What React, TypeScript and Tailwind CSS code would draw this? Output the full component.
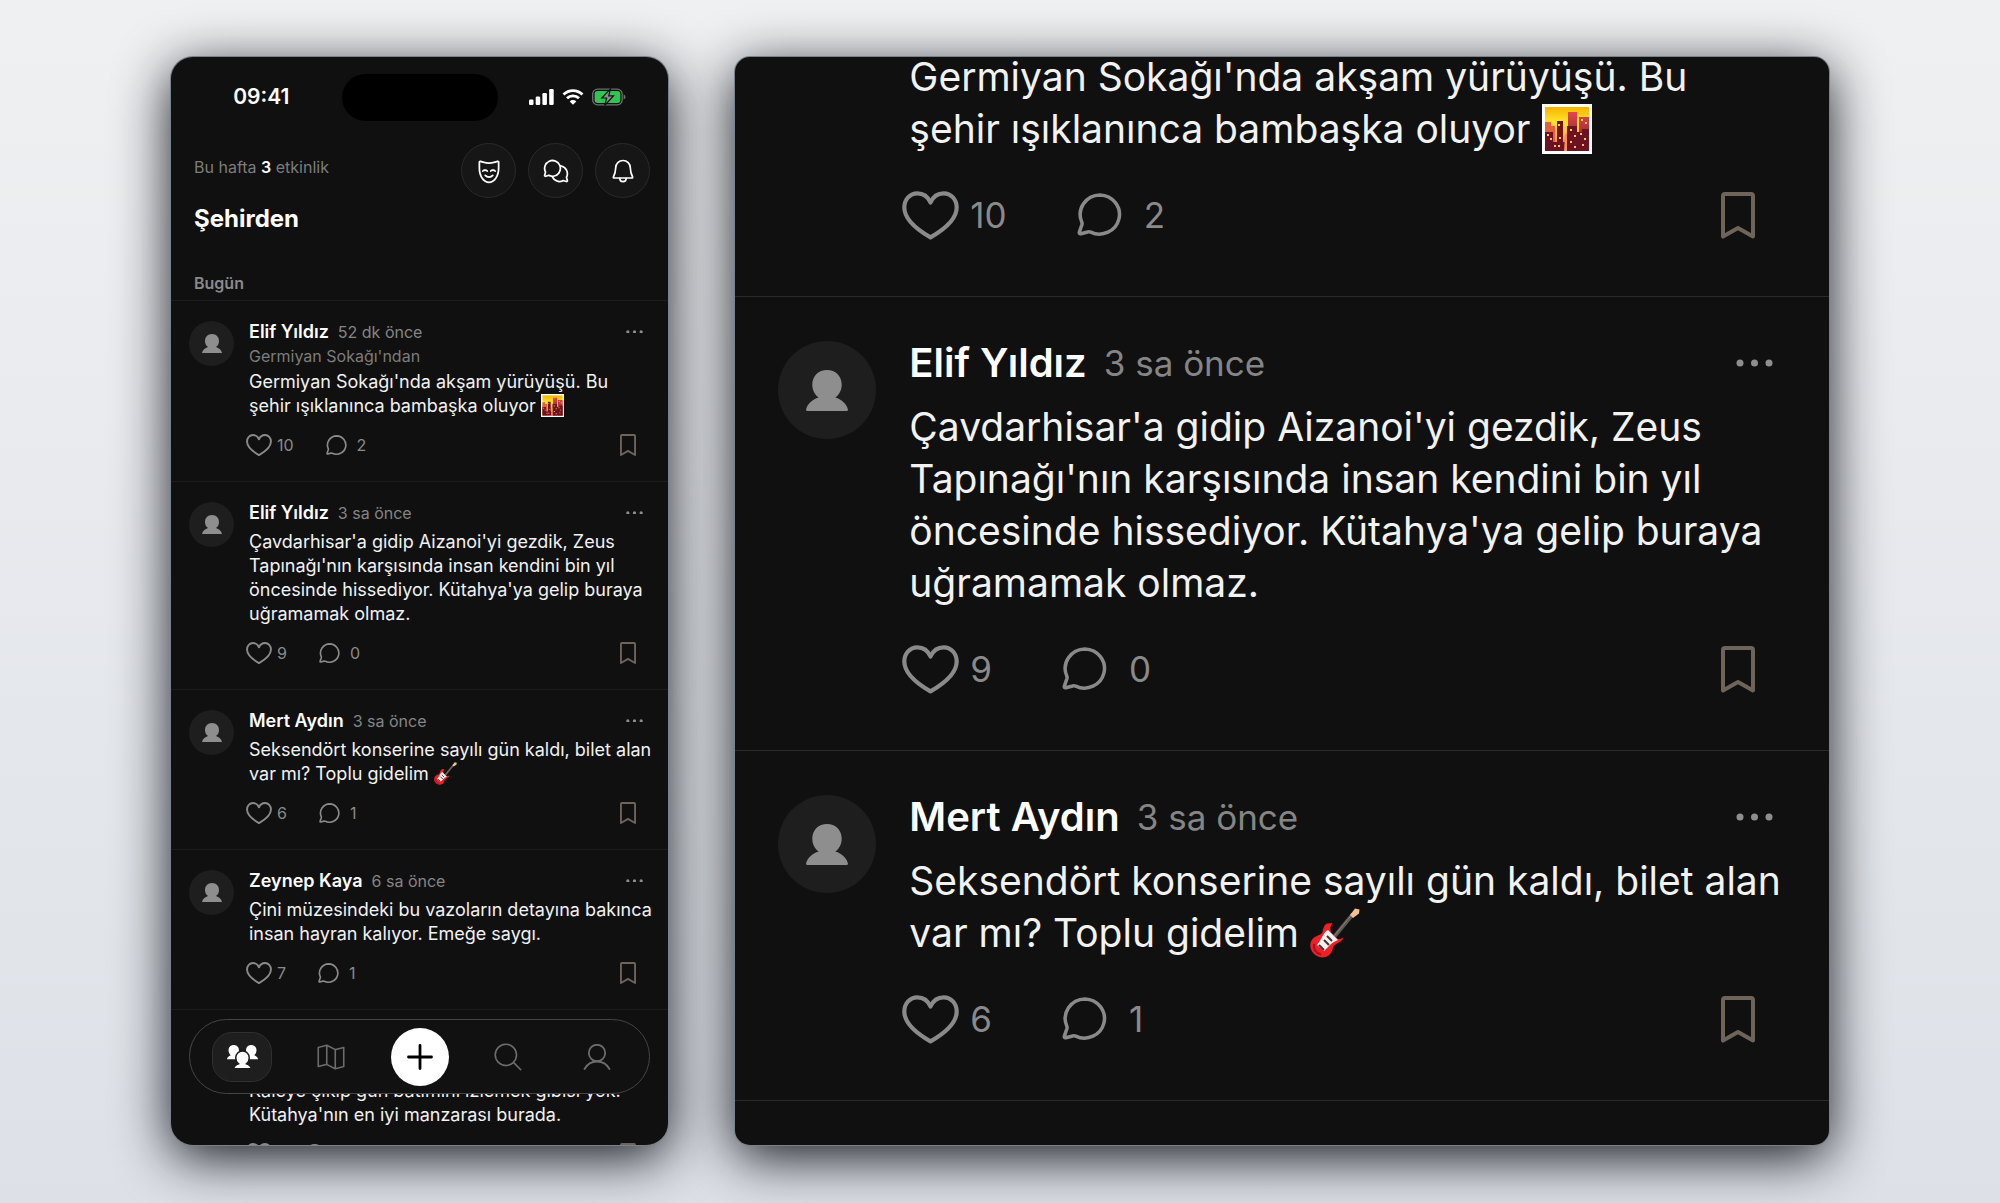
import type { ReactNode } from "react";
import {
  PiChatsCircle,
  PiMagnifyingGlassLight,
  PiMapTrifoldLight,
  PiMaskHappy,
} from "react-icons/pi";

type Size = "sm" | "lg";

type PostData = {
  author?: string;
  time?: string;
  place?: string;
  lines: string[];
  emoji?: "city" | "guitar";
  likes?: number;
  comments?: number;
};

const walk: PostData = {
  author: "Elif Yıldız",
  time: "52 dk önce",
  place: "Germiyan Sokağı'ndan",
  lines: ["Germiyan Sokağı'nda akşam yürüyüşü. Bu", "şehir ışıklanınca bambaşka oluyor "],
  emoji: "city",
  likes: 10,
  comments: 2,
};

const temple: PostData = {
  author: "Elif Yıldız",
  time: "3 sa önce",
  lines: [
    "Çavdarhisar'a gidip Aizanoi'yi gezdik, Zeus",
    "Tapınağı'nın karşısında insan kendini bin yıl",
    "öncesinde hissediyor. Kütahya'ya gelip buraya",
    "uğramamak olmaz.",
  ],
  likes: 9,
  comments: 0,
};

const concert: PostData = {
  author: "Mert Aydın",
  time: "3 sa önce",
  lines: ["Seksendört konserine sayılı gün kaldı, bilet alan", "var mı? Toplu gidelim "],
  emoji: "guitar",
  likes: 6,
  comments: 1,
};

const museum: PostData = {
  author: "Zeynep Kaya",
  time: "6 sa önce",
  lines: ["Çini müzesindeki bu vazoların detayına bakınca", "insan hayran kalıyor. Emeğe saygı."],
  likes: 7,
  comments: 1,
};

const castle: PostData = {
  place: " ",
  lines: ["Kaleye çıkıp gün batımını izlemek gibisi yok.", "Kütahya'nın en iyi manzarası burada."],
};

const styles = {
  sm: {
    post: "gap-[15px] pb-[22px] pl-[18px] pr-[18px]",
    top: "pt-5",
    avatar: "size-[45px]",
    person: "w-5",
    nameRow: "h-[21px] gap-[9px]",
    name: "text-[18px]",
    time: "text-[16px]",
    place: "mt-1 h-5 text-[16px]",
    dots: "w-[17px] mr-[7px]",
    text: "text-[18px] leading-[24px]",
    textGap: "mt-[7px]",
    textGapAfterPlace: "mt-1",
    emoji: "size-[23px]",
    actions: "mt-[13px] h-7 text-[16px]",
    like: "-ml-[3px] gap-[5px]",
    heart: "w-[26px]",
    comment: "ml-8 gap-[10px]",
    bubble: "w-[21px]",
    bookmark: "w-4 mr-[14px]",
  },
  lg: {
    post: "gap-[33px] pb-[51px] pl-[43px] pr-[43px]",
    top: "pt-[44px]",
    avatar: "size-[98px]",
    person: "w-[42px]",
    nameRow: "h-[44px] gap-[17px]",
    name: "text-[40px]",
    time: "text-[35px]",
    place: "h-[46px] text-[35px]",
    dots: "w-[37px] mr-[13px]",
    text: "text-[39px] leading-[52px]",
    textGap: "mt-4",
    textGapAfterPlace: "mt-4",
    emoji: "size-[50px]",
    actions: "mt-[30px] h-[60px] text-[35px]",
    like: "-ml-[7px] gap-[11px]",
    heart: "w-[57px]",
    comment: "ml-[70px] gap-[22px]",
    bubble: "w-[45px]",
    bookmark: "w-[34px] mr-[31px]",
  },
};

function Person({ className }: { className: string }) {
  return (
    <svg viewBox="0 0 42 41" className={className} fill="currentColor" aria-hidden="true">
      <path d="M21 0C29.5 0 35.7 6 35.7 14.5C35.7 20.5 33 25 29.3 27.5C36 29.5 40.5 34 41.9 39.3Q42.2 41 40.6 41H1.4Q-.2 41 .1 39.3C1.5 34 6 29.5 12.7 27.5C9 25 6.3 20.5 6.3 14.5C6.3 6 12.5 0 21 0Z" />
    </svg>
  );
}

function Heart({ className }: { className: string }) {
  return (
    <svg viewBox="0 0 57 49" className={className} fill="none" stroke="currentColor" strokeWidth="4.2" strokeLinejoin="round" aria-hidden="true">
      <path d="M28.5 46.4C20 41.5 2.3 31 2.3 16.5C2.3 8.3 8 2.3 15.3 2.3C21.5 2.3 26 5.8 28.5 11.5C31 5.8 35.5 2.3 41.7 2.3C49 2.3 54.7 8.3 54.7 16.5C54.7 31 37 41.5 28.5 46.4Z" />
    </svg>
  );
}

function Bubble({ className }: { className: string }) {
  return (
    <svg viewBox="0 0 46 44" className={className} fill="none" stroke="currentColor" strokeWidth="3.6" strokeLinejoin="round" aria-hidden="true">
      <path d="M23.5 2A20.5 20 0 1 1 14 40Q12.4 39.3 10.8 39.8L4 41.6Q2 42 2.4 40L5 32.5Q5.4 31 4.9 29.8A20.5 20 0 0 1 23.5 2Z" />
    </svg>
  );
}

function Bookmark({ className }: { className: string }) {
  return (
    <svg viewBox="0 0 34 47" className={className} fill="none" stroke="currentColor" strokeWidth="4" strokeLinejoin="round" aria-hidden="true">
      <path d="M2 44.6V4Q2 2 4 2H30Q32 2 32 4V44.6L17 36Z" />
    </svg>
  );
}

function Bell() {
  return (
    <svg viewBox="0 0 22 24" className="w-[22px]" fill="none" stroke="currentColor" strokeWidth="1.7" strokeLinejoin="round" strokeLinecap="round" aria-hidden="true">
      <path d="M11 1.500C6.800 1.500 3.800 4.600 3.700 8.700C3.600 13 2.800 15.300 1.400 18Q1.100 19 2 19H20Q20.900 19 20.600 18C19.200 15.300 18.400 13 18.300 8.700C18.200 4.600 15.200 1.500 11 1.500Z" />
      <path d="M7.800 19.300C7.800 21.400 9.200 22.700 11 22.700S14.200 21.400 14.200 19.300" />
    </svg>
  );
}

function City({ className }: { className: string }) {
  return (
    <svg viewBox="0 0 50 50" className={`inline-block align-[-22%] ${className}`} role="img" aria-label="Gün batımında şehir">
      <defs>
        <linearGradient id="dusk" x1="0" y1="0" x2="0" y2="1">
          <stop offset="0" stopColor="#f5b400" />
          <stop offset=".35" stopColor="#ffe52e" />
          <stop offset="1" stopColor="#ff6b3d" />
        </linearGradient>
        <linearGradient id="tower" x1="0" y1="0" x2="0" y2="1">
          <stop offset="0" stopColor="#e0474c" />
          <stop offset="1" stopColor="#7a1522" />
        </linearGradient>
      </defs>
      <rect width="50" height="50" fill="#fff" />
      <rect x="3" y="3" width="44" height="44" fill="url(#dusk)" />
      <path d="M3 18H9V22H13V47H3Z" fill="#e2603a" />
      <path d="M26 8H35V47H26ZM37 13H47V47H37Z" fill="url(#tower)" />
      <path d="M3 28H11V38H15V17H21V38H23V47H3ZM25 22H35V28H40V25H47V47H25Z" fill="#6d1220" />
      <path d="M5 30h2v2H5zM8 34h2v2H8zM12 41h2v2h-2zM16 20h2v2h-2zM17 33h2v2h-2zM16 41h2v2h-2zM28 25h2v2h-2zM32 31h2v2h-2zM28 37h2v2h-2zM32 42h2v2h-2zM39 15h2v2h-2zM43 18h2v2h-2zM38 29h2v2h-2zM42 34h2v2h-2zM40 40h2v2h-2z" fill="#ffc46b" />
      <path d="M23 30H25V47H22Z" fill="#ff8a5c" />
    </svg>
  );
}

function Guitar({ className }: { className: string }) {
  return (
    <svg viewBox="0 0 50 50" className={`inline-block align-[-22%] ${className}`} role="img" aria-label="Gitar">
      <path d="M24 29L43 6" stroke="#5d5550" strokeWidth="4" />
      <path d="M24.500 27.500L42 6.500" stroke="#8c8078" strokeWidth="1" />
      <path d="M40 7L45 .6L49.500 1.500L49 5.500L43 10Z" fill="#f3c08f" />
      <path d="M17 15.500C14 17 13 21 12.500 24C11.500 27.500 6 27 2.500 31C-1.500 36 0 44 6 47.500C12 51 19 49.500 21.500 44C23 40 23.500 37 27 35.500C30 34 33 32.500 33 29.500C30 31.500 27.500 31.500 26 29.500L22 25.500C19.500 22.500 20 18.500 22.500 15Z" fill="#ee1f27" />
      <path d="M18 22C14 24 13 28 11 31L7 37L14 43L20 37C23 34 26 33 28 32L22 26Z" fill="#f4f0ee" />
      <path d="M9 37L14 42M14 32L19 37M17 28L22 33" stroke="#3b3433" strokeWidth="2" />
      <path d="M4 36C3 41 6 45 11 46.500" stroke="#a80f19" strokeWidth="2" fill="none" />
    </svg>
  );
}

function Post({ post, size, continued = false }: { post: PostData; size: Size; continued?: boolean }) {
  const s = styles[size];
  const divider = size === "sm" ? "border-[#1c1c1c]" : "border-[#2a2a2a]";
  return (
    <article className={`flex shrink-0 items-start border-b ${divider} ${s.post} ${continued ? "" : s.top}`}>
      <div
        className={`flex shrink-0 items-center justify-center rounded-full bg-[#1e1e1e] text-[#8e8e8e] ${s.avatar} ${continued ? "invisible" : ""}`}
      >
        <Person className={s.person} />
      </div>
      <div className="min-w-0 flex-1">
        {!continued && (
          <header className={`flex items-center whitespace-nowrap ${s.nameRow}`}>
            <h3 className={`font-semibold text-white ${s.name}`}>{post.author}</h3>
            <span className={`text-[#858585] ${s.time}`}>{post.time}</span>
            <button type="button" aria-label="Diğer seçenekler" className={`ml-auto text-[#8e8e8e] ${s.dots}`}>
              <svg viewBox="0 0 37 8" className="w-full" fill="currentColor" aria-hidden="true">
                <circle cx="4" cy="4" r="3.500" />
                <circle cx="18.500" cy="4" r="3.500" />
                <circle cx="33" cy="4" r="3.500" />
              </svg>
            </button>
          </header>
        )}
        {!continued && post.place && (
          <p className={`flex items-center whitespace-nowrap text-[#7c7c7c] ${s.place}`}>{post.place}</p>
        )}
        <p
          className={`whitespace-pre text-[#f2f2f2] ${s.text} ${continued ? "" : post.place ? s.textGapAfterPlace : s.textGap}`}
        >
          {post.lines.join("\n")}
          {post.emoji === "city" && <City className={s.emoji} />}
          {post.emoji === "guitar" && <Guitar className={s.emoji} />}
        </p>
        <footer className={`flex items-center text-[#8a8a8a] ${s.actions}`}>
          <button type="button" aria-label="Beğen" className={`flex items-center ${s.like}`}>
            <Heart className={s.heart} />
            {post.likes}
          </button>
          <button type="button" aria-label="Yorumlar" className={`flex items-center ${s.comment}`}>
            <Bubble className={s.bubble} />
            {post.comments}
          </button>
          <button type="button" aria-label="Kaydet" className={`ml-auto text-[#6e6459] ${s.bookmark}`}>
            <Bookmark className="w-full" />
          </button>
        </footer>
      </div>
    </article>
  );
}

function StatusBar() {
  return (
    <div className="grid h-20 shrink-0 grid-cols-[1fr_156px_1fr] items-center">
      <time className="pl-[10px] text-center text-[21px] font-semibold text-white">09:41</time>
      <div className="h-[47px] rounded-full bg-black" />
      <div className="flex items-center justify-center gap-2 pr-[11px]">
        <svg viewBox="0 0 25 16" className="w-[25px]" fill="#fff" aria-hidden="true">
          <rect x="0" y="10.500" width="4.500" height="5.500" rx="1.300" />
          <rect x="6.700" y="7.500" width="4.500" height="8.500" rx="1.300" />
          <rect x="13.400" y="4" width="4.500" height="12" rx="1.300" />
          <rect x="20.200" y="0" width="4.500" height="16" rx="1.300" />
        </svg>
        <svg viewBox="0 0 22 16" className="w-[22px]" fill="none" stroke="#fff" strokeWidth="2.800" aria-hidden="true">
          <path d="M1.500 5.600A13.500 13.500 0 0 1 20.500 5.600" />
          <path d="M5 9.300A8.500 8.500 0 0 1 17 9.300" />
          <path d="M11 15.800L7.700 12.400A4.700 4.700 0 0 1 14.300 12.400Z" fill="#fff" stroke="none" />
        </svg>
        <svg viewBox="0 0 34 18" className="w-[34px]" aria-hidden="true">
          <rect x=".7" y="1.200" width="29.500" height="15.600" rx="4.800" fill="none" stroke="#6f6f6f" strokeWidth="1.300" />
          <rect x="2.600" y="3.100" width="25.700" height="11.800" rx="3" fill="#30c552" />
          <path d="M31.700 6.500Q33.600 7.300 33.600 9T31.700 11.500Z" fill="#6f6f6f" />
          <path d="M18.500 .8L9.800 10H14.600L12.600 17.500L21.500 7.900H16.700Z" fill="#8d8d8d" stroke="#101010" strokeWidth="1.200" />
        </svg>
      </div>
    </div>
  );
}

function RoundButton({ label, children }: { label: string; children: ReactNode }) {
  return (
    <button
      type="button"
      aria-label={label}
      className="flex size-[55px] items-center justify-center rounded-full border border-[#2a2a2a] bg-[#161616] text-[28px] text-white"
    >
      {children}
    </button>
  );
}

function TabBar() {
  return (
    <nav
      aria-label="Ana menü"
      className="absolute inset-x-[18px] bottom-[51px] grid h-[75px] grid-cols-5 items-center justify-items-center rounded-full border border-[#454545] bg-[#111111] px-2 text-[34px] text-[#6c6c6c]"
    >
      <button type="button" aria-label="Akış" className="flex h-[50px] w-[60px] items-center justify-center rounded-[20px] border border-[#303030] bg-[#1e1e1e] text-white">
        <svg viewBox="0 0 62 48" className="w-[31px]" fill="currentColor" aria-hidden="true">
          <path id="bust" d="M13.500 0C19.500 0 24 4.500 24 10.500C24 15 22 18.500 19.500 20.500C24 22 27 25 27 28.500H0C0 25 3 22 7.500 20.500C5 18.500 3 15 3 10.500C3 4.500 7.500 0 13.500 0Z" />
          <use href="#bust" x="35" />
          <path d="M31 12C38.800 12 44.500 17.800 44.500 25.500C44.500 31 42.300 35 39 37.500C44.500 39.500 48 43 49 47.500H13C14 43 17.500 39.500 23 37.500C19.700 35 17.500 31 17.500 25.500C17.500 17.800 23.200 12 31 12Z" stroke="#1e1e1e" strokeWidth="3" />
        </svg>
      </button>
      <button type="button" aria-label="Harita"><PiMapTrifoldLight /></button>
      <button type="button" aria-label="Yeni gönderi" className="flex size-[58px] items-center justify-center rounded-full bg-white text-black">
        <svg viewBox="0 0 26 26" className="w-[26px]" fill="none" stroke="currentColor" strokeWidth="2.800" strokeLinecap="round" aria-hidden="true">
          <path d="M13 1.500V24.500M1.500 13H24.500" />
        </svg>
      </button>
      <button type="button" aria-label="Ara"><PiMagnifyingGlassLight /></button>
      <button type="button" aria-label="Profil">
        <svg viewBox="0 0 28 26" className="w-7" fill="none" stroke="currentColor" strokeWidth="1.800" strokeLinecap="round" aria-hidden="true">
          <circle cx="14" cy="9" r="8.200" />
          <path d="M1.500 25C4 20.500 8.500 17.500 14 17.500S24 20.500 26.500 25" />
        </svg>
      </button>
    </nav>
  );
}

function PhoneScreen() {
  return (
    <section className="relative flex min-w-0 flex-col overflow-hidden rounded-[22px] bg-[#101010] shadow-[0_0_0_1px_#78818c,0_12px_54px_rgba(10,14,20,0.96)]">
      <StatusBar />
      <header className="flex shrink-0 items-start justify-between pt-[6px] pr-[18px] pl-[23px]">
        <div>
          <p className="pt-[12px] text-[16px] leading-[24px] text-[#7c7c7c]">
            Bu hafta <strong className="font-semibold text-white">3</strong> etkinlik
          </p>
          <h1 className="mt-6 text-[24px] leading-[32px] font-bold text-white">Şehirden</h1>
        </div>
        <div className="flex gap-3">
          <RoundButton label="Etkinlikler"><PiMaskHappy /></RoundButton>
          <RoundButton label="Sohbetler"><PiChatsCircle /></RoundButton>
          <RoundButton label="Bildirimler"><Bell /></RoundButton>
        </div>
      </header>
      <h2 className="mt-9 shrink-0 border-b border-[#1c1c1c] pb-[5px] pl-[23px] text-[16px] leading-[24px] font-semibold text-[#8a8a8a]">Bugün</h2>
      <div className="flex min-h-0 flex-1 flex-col">
        {[walk, temple, concert, museum, castle].map((post, i) => (
          <Post key={i} post={post} size="sm" />
        ))}
      </div>
      <TabBar />
    </section>
  );
}

function DetailScreen() {
  return (
    <section className="flex min-w-0 flex-col justify-end overflow-hidden rounded-[15px] bg-[#101010] pb-[44px] shadow-[0_0_0_1px_#78818c,0_12px_54px_rgba(10,14,20,0.96)]">
      {[walk, temple, concert].map((post, i) => (
        <Post key={i} post={post} size="lg" continued={i === 0} />
      ))}
    </section>
  );
}

export default function App() {
  return (
    <main
      lang="tr"
      className="grid h-screen grid-cols-[497fr_1093fr] grid-rows-[minmax(0,1fr)] gap-[67px] bg-linear-to-b from-[#eff0f2] to-[#dde1e7] px-[171px] pt-[57px] pb-[58px] font-['Inter',sans-serif]"
    >
      <PhoneScreen />
      <DetailScreen />
    </main>
  );
}
